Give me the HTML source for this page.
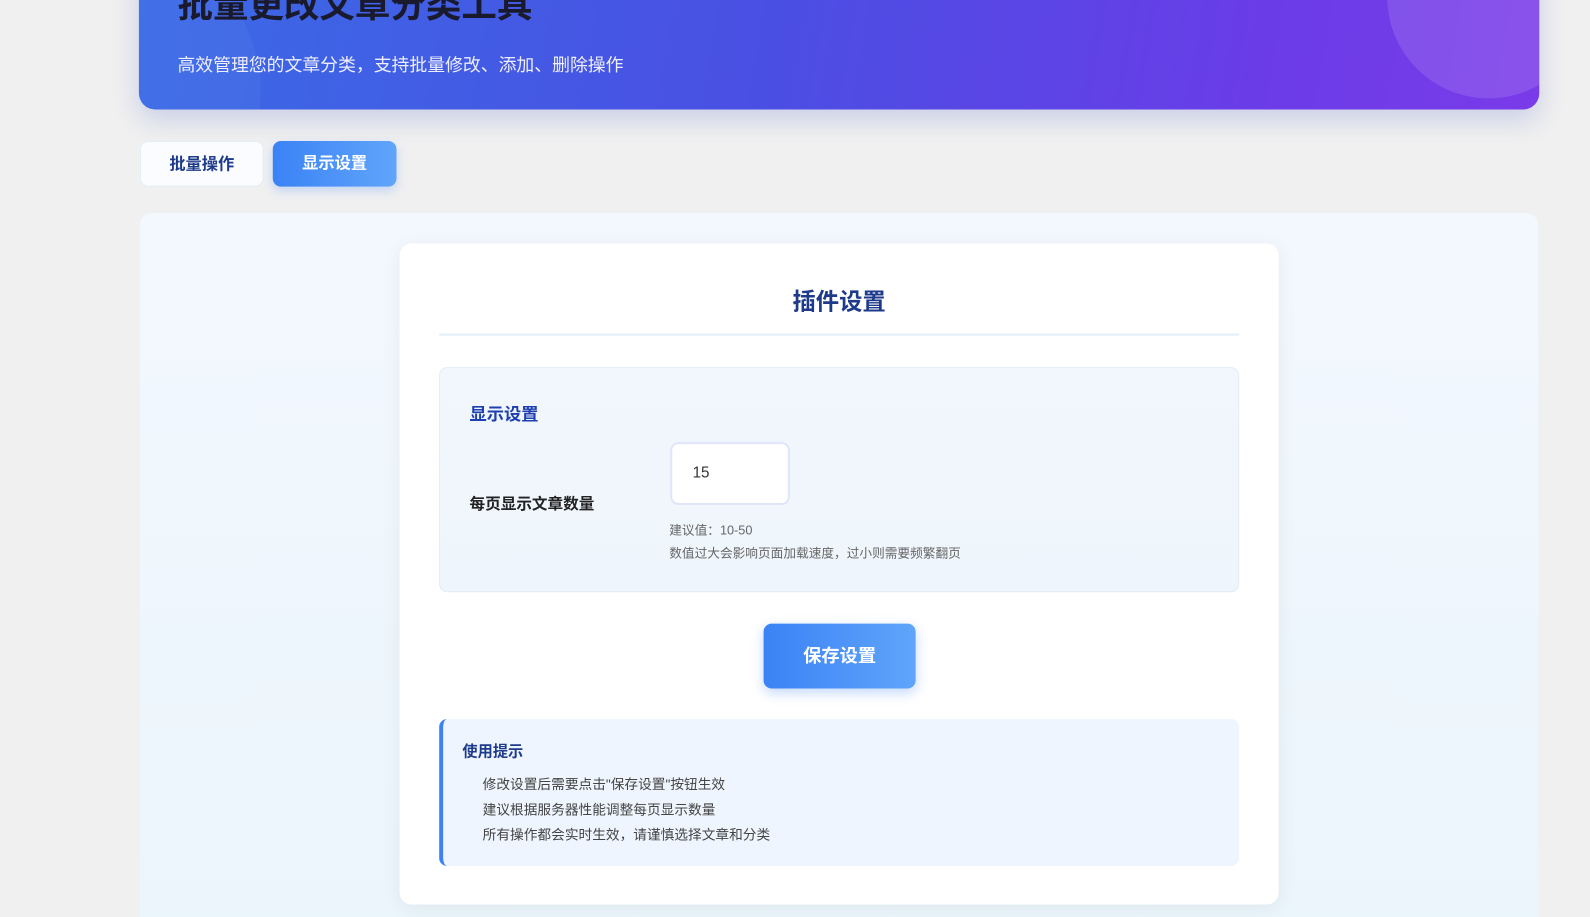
<!DOCTYPE html>
<html><head><meta charset="utf-8"><style>
*{box-sizing:border-box;margin:0;padding:0}
html,body{width:1590px;height:917px;overflow:hidden;background:#f0f0f0}
body{font-family:"Liberation Sans","Noto Sans CJK SC",sans-serif;position:relative}
#w{position:absolute;left:0;top:0;width:1568px;height:905px;transform:scale(1.01403);transform-origin:0 0}
.hdr{position:absolute;left:137px;top:-40px;width:1381px;height:148px;border-radius:16px;background:linear-gradient(100deg,#3a6be6 0%,#4a4fe3 45%,#6a3ce8 80%,#7a3be9 100%);overflow:hidden;box-shadow:0 10px 25px rgba(70,90,200,.22)}
.hdr .c1{position:absolute;right:-50px;top:-63px;width:200px;height:200px;border-radius:50%;background:rgba(255,255,255,.12)}
.hdr .c2{position:absolute;left:-180px;top:-20px;width:300px;height:300px;border-radius:50%;background:rgba(255,255,255,.04)}
.hdr h1{position:absolute;left:38px;top:26px;font-size:35px;font-weight:bold;color:#1a1a2e;line-height:40px}
.hdr p{position:absolute;left:38px;top:92px;font-size:17.6px;color:#eef;line-height:24px}
.tab{position:absolute;top:139px;height:45px;width:122px;border-radius:8px;font-size:16px;font-weight:bold;text-align:center;line-height:45px}
.t1{left:138px;background:#fafcff;color:#1e3a8a;border:1px solid #e6ecf5}
.t2{left:269px;background:linear-gradient(90deg,#3b82f6,#60a5fa);color:#fff;box-shadow:0 4px 10px rgba(59,130,246,.25)}
.main{position:absolute;left:138px;top:210px;width:1379px;height:720px;border-radius:12px;background:linear-gradient(180deg,#f3f8fe,#ebf5fc)}
.card{position:absolute;left:394px;top:240px;width:867px;height:652px;background:#fff;border-radius:12px;box-shadow:0 4px 20px rgba(0,0,0,.06)}
.ct{position:absolute;left:394px;width:867px;top:282px;text-align:center;font-size:23px;font-weight:bold;color:#1e3a8a;line-height:30px}
.line{position:absolute;left:433px;top:329px;width:789px;height:2px;background:#e3eef8}
.sec{position:absolute;left:433px;top:362px;width:789px;height:222px;border-radius:8px;background:linear-gradient(180deg,#f2f7fd,#eef5fc);border:1px solid #e2ecf7}
.abs{position:absolute;white-space:nowrap}
.inp{position:absolute;left:661px;top:436px;width:118px;height:62px;border:2px solid #dfe6fb;border-radius:8px;background:#fff;font-size:15px;color:#333;padding-left:20px;line-height:58px}
.btn{position:absolute;left:753px;top:615px;width:150px;height:64px;border-radius:8px;background:linear-gradient(90deg,#3b82f6,#60a5fa);color:#fff;font-size:18px;font-weight:bold;text-align:center;line-height:64px;box-shadow:0 4px 12px rgba(59,130,246,.3)}
.tips{position:absolute;left:433px;top:709px;width:789px;height:145px;border-radius:8px;background:#eef5fe;border-left:4px solid #3b82f6}
.h{font-size:12.5px;color:#666}
.li{font-size:13.5px;color:#444}
</style></head><body><div id="w">
<div class="hdr"><div class="c2"></div><div class="c1"></div>
<h1>批量更改文章分类工具</h1><p>高效管理您的文章分类，支持批量修改、添加、删除操作</p></div>
<div class="tab t1">批量操作</div><div class="tab t2">显示设置</div>
<div class="main"></div>
<div class="card"></div>
<div class="ct">插件设置</div>
<div class="line"></div>
<div class="sec"></div>
<div class="abs" style="left:463px;top:394px;font-size:17px;font-weight:bold;color:#1e40af">显示设置</div>
<div class="abs" style="left:463px;top:485px;font-size:15.4px;font-weight:bold;color:#222">每页显示文章数量</div>
<div class="inp">15</div>
<div class="abs h" style="left:660px;top:512px">建议值：10-50</div>
<div class="abs h" style="left:660px;top:535px">数值过大会影响页面加载速度，过小则需要频繁翻页</div>
<div class="btn">保存设置</div>
<div class="tips"></div>
<div class="abs" style="left:456px;top:730px;font-size:15px;font-weight:bold;color:#1e3a8a">使用提示</div>
<div class="abs li" style="left:476px;top:762px">修改设置后需要点击"保存设置"按钮生效</div>
<div class="abs li" style="left:476px;top:787px">建议根据服务器性能调整每页显示数量</div>
<div class="abs li" style="left:476px;top:812px">所有操作都会实时生效，请谨慎选择文章和分类</div>
</div></body></html>
